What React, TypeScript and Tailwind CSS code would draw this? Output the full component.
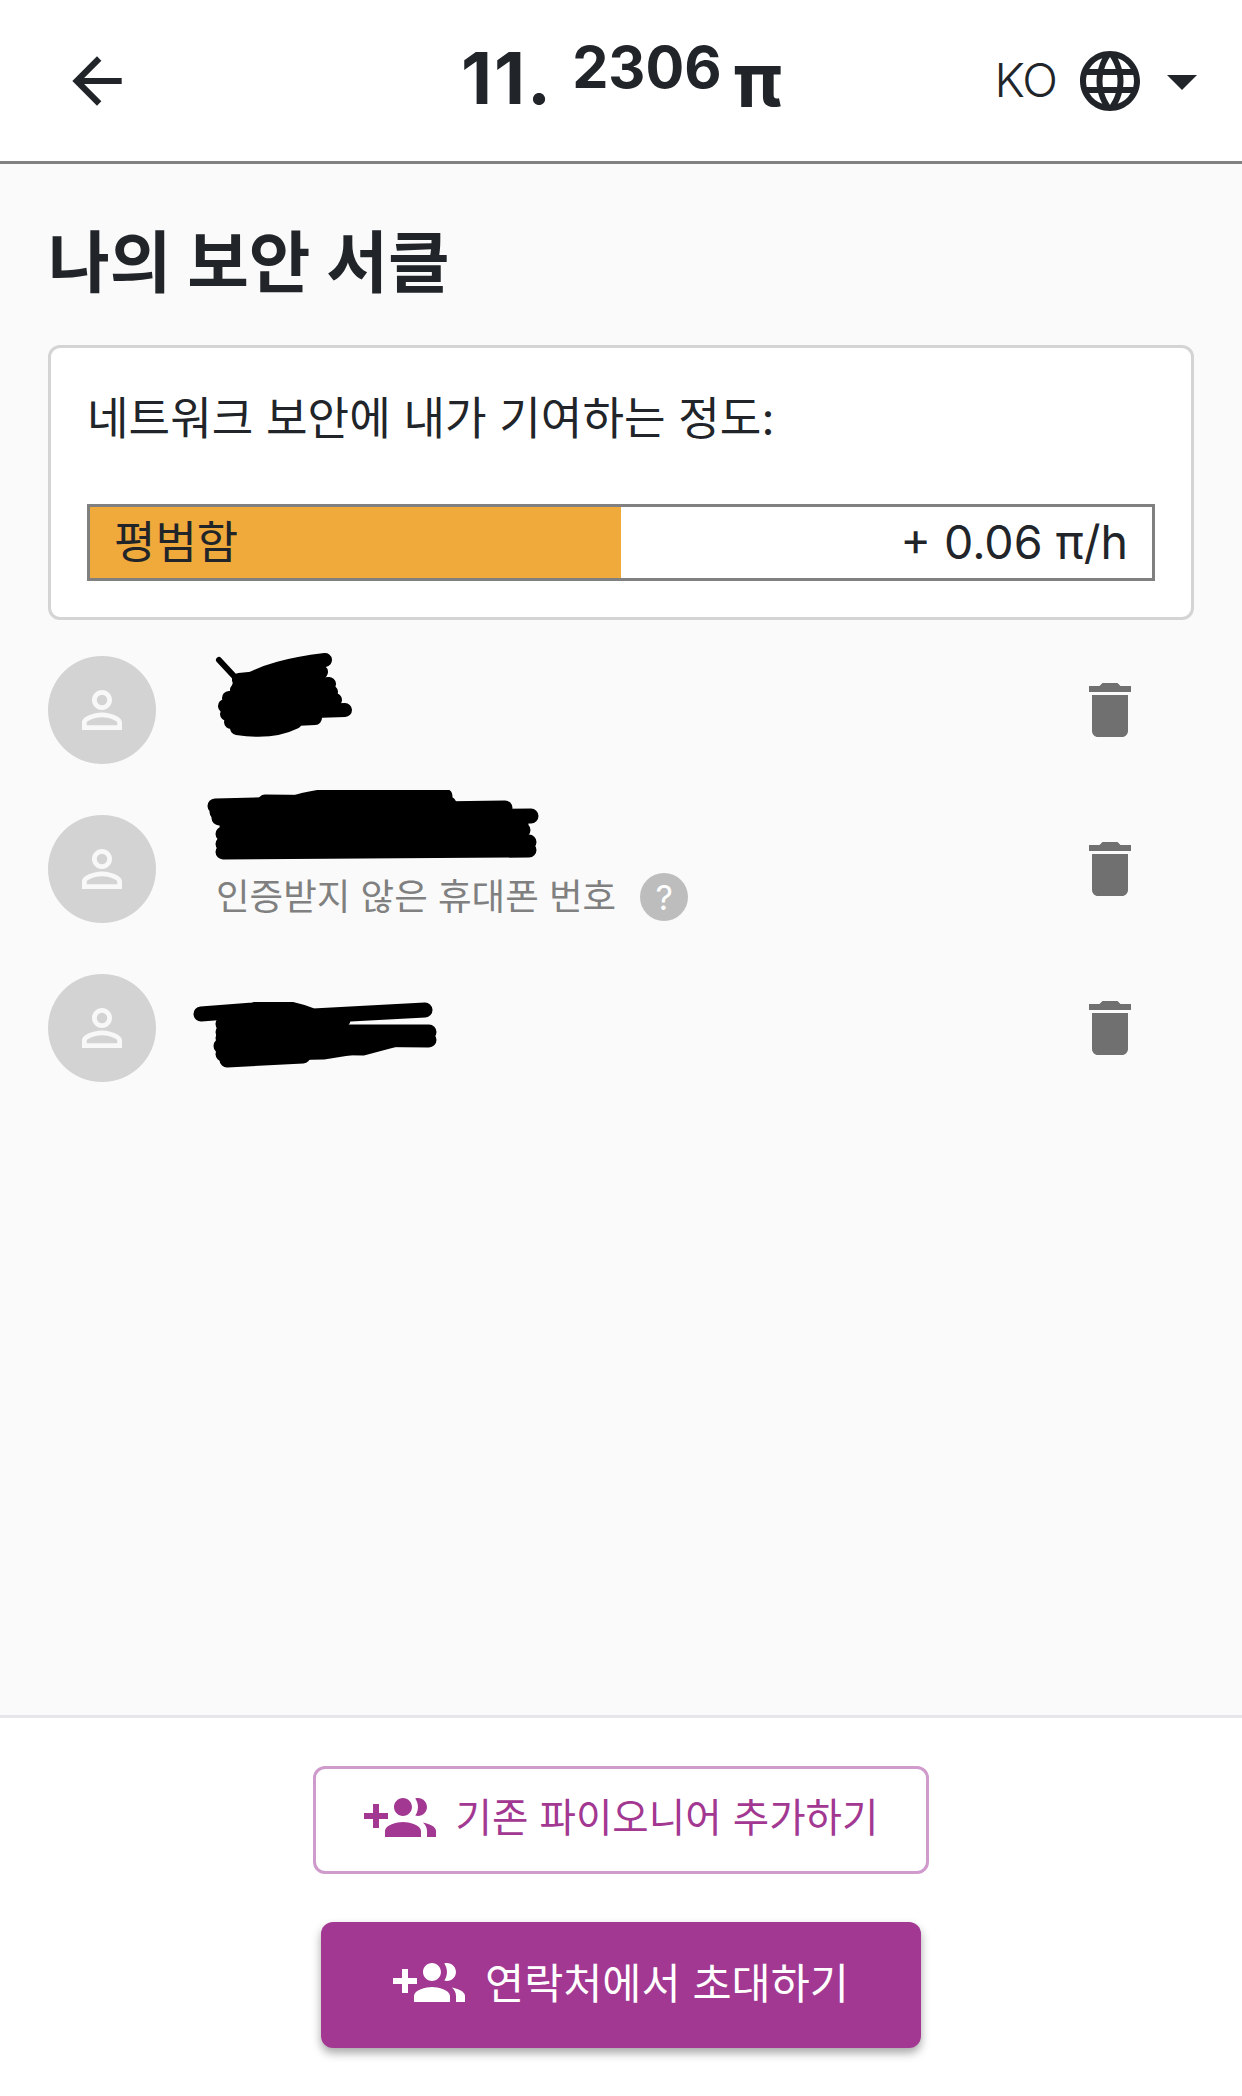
import { MdArrowBack, MdArrowDropDown, MdDelete, MdLanguage, MdPersonOutline } from "react-icons/md";

const scribbles = [
  {
    box: "left-[-24px] top-[-60px] w-[180px] h-[100px]",
    tick: "M26 10 L52 38",
    strokes: [
      "M46 36 C70 20 100 14 132 10",
      "M46 30 L128 22",
      "M44 40 L136 34",
      "M36 48 L138 42",
      "M32 56 L142 50",
      "M34 64 L152 60",
      "M38 72 L122 68",
      "M44 78 C70 82 90 78 102 72",
    ],
    width: 14,
  },
  {
    box: "left-[-12px] top-[-24px] w-[350px] h-[80px]",
    strokes: [
      "M10 16 L86 14 C120 2 190 0 240 6",
      "M60 12 L244 14",
      "M12 22 L300 18",
      "M14 28 L326 26",
      "M22 36 L316 34",
      "M18 44 L318 40",
      "M18 54 L324 52",
      "M18 62 L324 60",
    ],
    width: 15,
  },
  {
    box: "left-[-24px] top-[-26px] w-[260px] h-[70px]",
    strokes: [
      "M8 12 L60 8 C80 2 100 6 120 14 L232 8",
      "M30 14 L150 18",
      "M30 22 L130 24",
      "M30 30 L236 30",
      "M30 36 L236 38",
      "M28 44 L170 46 L200 38",
      "M30 52 L130 50 L180 42",
      "M34 58 L110 54",
    ],
    width: 15,
  },
];

const members = [
  { id: 1, note: false },
  { id: 2, note: true },
  { id: 3, note: false },
];

// plus on the left, unlike the icon set's current version
const GroupAdd = ({ className }: { className?: string }) => (
  <svg viewBox="0 0 24 24" fill="currentColor" className={className}>
    <path d="M8 10H5V7H3v3H0v2h3v3h2v-3h3v-2zm10 1c1.66 0 2.99-1.34 2.99-3S19.66 5 18 5c-.32 0-.63.05-.91.14.57.81.9 1.79.9 2.86s-.34 2.04-.9 2.86c.28.09.59.14.91.14zm-5 0c1.66 0 2.99-1.34 2.99-3S14.66 5 13 5s-3 1.34-3 3 1.34 3 3 3zm6.62 2.16c.83.73 1.38 1.66 1.38 2.84v2h3v-2c0-1.54-2.37-2.49-4.38-2.84zM13 13c-2 0-6 1-6 3v2h12v-2c0-2-4-3-6-3z" />
  </svg>
);

export default function App() {
  return (
    <div className="flex h-[2096px] w-[1242px] flex-col bg-[#fafafa] font-['Inter','Noto_Sans_CJK_KR',sans-serif] text-[#212529]">
      {/* Header */}
      <header className="relative flex h-[164px] shrink-0 items-center justify-between border-b-[3px] border-[#808080] bg-white pl-[60px] pr-[42px]">
        <MdArrowBack size={74} />
        <div className="absolute left-[461px] top-[24px] flex items-start font-bold">
          <span className="text-[72px] tracking-[2px]">11.</span>
          <span className="ml-[19px] text-[57.5px]">2306</span>
          <span className="ml-[12px] mt-[-2px] text-[76px]">π</span>
        </div>
        <div className="flex items-center">
          <span className="mr-[17px] text-[47px] font-light tracking-[-1px]">KO</span>
          <MdLanguage size={72} />
          <MdArrowDropDown size={72} className="mr-[-18px]" />
        </div>
      </header>

      {/* Main */}
      <main className="flex-1 px-[48px]">
        <h1 className="mt-[59px] text-[67px] font-bold leading-[80px]">나의 보안 서클</h1>

        <section className="mt-[42px] rounded-[12px] border-[3px] border-[#d4d4d4] bg-white px-[36px] pb-[36px] pt-[41px]">
          <p className="text-[45.2px] leading-[60px]">네트워크 보안에 내가 기여하는 정도:</p>
          <div className="relative mt-[55px] flex h-[77px] items-center justify-between border-[3px] border-[#808080] bg-white pl-[24px] pr-[24px]">
            <div className="absolute inset-y-0 left-0 w-[531px] bg-[#f0a93b]" />
            <span className="relative text-[45px]">평범함</span>
            <span className="relative text-[46.5px]">+ 0.06 π/h</span>
          </div>
        </section>

        <ul className="mt-[36px] flex flex-col gap-[51px]">
          {members.map((m, i) => (
            <li key={m.id} className="flex h-[108px] items-center">
              <div className="flex h-[108px] w-[108px] shrink-0 items-center justify-center rounded-full bg-[#d3d3d3]">
                <MdPersonOutline size={60} className="text-[#f8f8f8]" />
              </div>
              <div className="relative ml-[61px] flex-1">
                <svg className={`absolute ${scribbles[i].box}`} fill="none" stroke="#000" strokeLinecap="round" strokeLinejoin="round" strokeWidth={scribbles[i].width}>
                  {scribbles[i].tick && <path d={scribbles[i].tick} strokeWidth={6} />}
                  {scribbles[i].strokes.map((d) => (
                    <path key={d} d={d} />
                  ))}
                </svg>
                {m.note && (
                  <div className="mt-[56px] flex items-center">
                    <span className="ml-[-1px] text-[36.5px] text-[#808080]">인증받지 않은 휴대폰 번호</span>
                    <span className="ml-[24px] flex h-[48px] w-[48px] items-center justify-center rounded-full bg-[#bdbdbd] text-[34px] text-white">?</span>
                  </div>
                )}
              </div>
              <MdDelete size={72} className="mr-[48px] shrink-0 text-[#707070]" />
            </li>
          ))}
        </ul>
      </main>

      {/* Footer */}
      <footer className="flex h-[381px] shrink-0 flex-col items-center border-t-[3px] border-[#e6e6ea] bg-white pt-[48px]">
        <button className="flex h-[108px] w-[616px] items-center justify-center rounded-[12px] border-[3px] border-[#cf9bcd] bg-white pb-[3px] text-[39.6px] text-[#a23891]">
          <GroupAdd className="mr-[20px] h-[72px] w-[72px]" />
          기존 파이오니어 추가하기
        </button>
        <button className="mt-[48px] flex h-[126px] w-[600px] items-center justify-center rounded-[12px] bg-[#a23891] pb-[2px] text-[42.5px] text-white shadow-[0_5px_10px_rgba(0,0,0,0.35)]">
          <GroupAdd className="mr-[20px] h-[72px] w-[72px]" />
          연락처에서 초대하기
        </button>
      </footer>
    </div>
  );
}
